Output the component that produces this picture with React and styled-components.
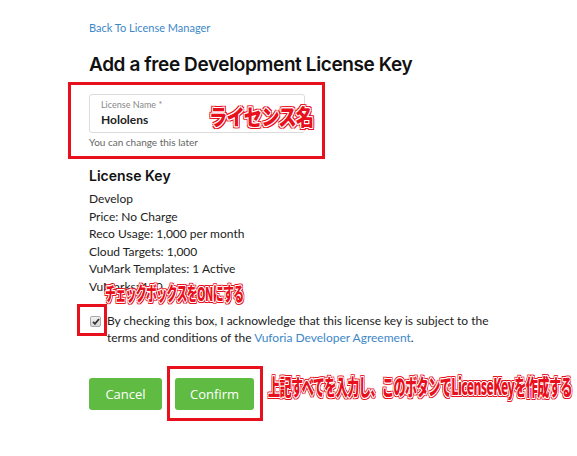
import React from 'react'
import styled, { createGlobalStyle } from 'styled-components'

const Global = createGlobalStyle`
  body {
    margin: 0;
    background: #ffffff;
    font-family: Lato, "Liberation Sans", sans-serif;
    color: #222;
  }
`

const Page = styled.div`
  width: 577px;
  height: 456px;
  padding: 21px 0 0 89px;
  box-sizing: border-box;
  position: relative;
  overflow: hidden;
`

const BackLink = styled.a`
  display: block;
  font-size: 11px;
  line-height: 14px;
  color: #3d87c7;
  text-decoration: none;
`

const Title = styled.h1`
  margin: 17px 0 0;
  font-family: Inter, "Liberation Sans", sans-serif;
  font-size: 19px;
  line-height: 26px;
  font-weight: 600;
  color: #111;
  letter-spacing: -0.4px;
`

const FieldArea = styled.div`
  position: relative;
  margin-top: 8px;
  width: 216px;
  padding-top: 8px;
`

const Highlight = styled.div`
  position: absolute;
  border: 3px solid #e8101c;
  pointer-events: none;
  left: ${p => p.$left}px;
  top: ${p => p.$top}px;
  width: ${p => p.$width}px;
  height: ${p => p.$height}px;
  box-sizing: border-box;
`

const InputBox = styled.div`
  border: 1px solid #dcdcdc;
  border-radius: 3px;
  height: 39px;
  box-sizing: border-box;
  padding: 4px 11px 0;
`

const InputLabel = styled.div`
  font-size: 9px;
  line-height: 12px;
  color: #888;
`

const InputValue = styled.div`
  font-size: 12px;
  line-height: 17px;
  color: #222;
  font-weight: 700;
`

const Helper = styled.div`
  font-size: 10px;
  line-height: 14px;
  color: #666;
  margin-top: 2px;
`

const SectionTitle = styled.h2`
  margin: 18px 0 0;
  font-family: Inter, "Liberation Sans", sans-serif;
  font-size: 14px;
  line-height: 18px;
  font-weight: 600;
  color: #111;
`

const InfoList = styled.div`
  margin-top: 5px;
  font-size: 12px;
  line-height: 17.5px;
  color: #222;
`

const Note = styled.div`
  position: absolute;
  left: ${p => p.$left}px;
  top: ${p => p.$top}px;
  font-family: "Noto Sans CJK JP", sans-serif;
  font-weight: 900;
  font-size: ${p => p.$size}px;
  line-height: 1;
  color: #e8101c;
  white-space: nowrap;
  transform: scaleX(${p => p.$squeeze});
  transform-origin: left center;
  letter-spacing: -1px;
  text-shadow:
    1px 0 0 #fff, -1px 0 0 #fff, 0 1px 0 #fff, 0 -1px 0 #fff,
    1px 1px 0 #fff, -1px -1px 0 #fff, 1px -1px 0 #fff, -1px 1px 0 #fff,
    2px 0 0 #e8101c, -2px 0 0 #e8101c, 0 2px 0 #e8101c, 0 -2px 0 #e8101c,
    2px 2px 0 #e8101c, -2px -2px 0 #e8101c, 2px -2px 0 #e8101c, -2px 2px 0 #e8101c;
`

const AgreeRow = styled.div`
  position: relative;
  display: flex;
  align-items: flex-start;
  gap: 6px;
  margin-top: 17px;
  width: 420px;
`

const Check = styled.span`
  margin: 4px 0 0 1px;
  width: 11px;
  height: 11px;
  flex: none;
  box-sizing: border-box;
  border: 1px solid #a9a9a9;
  border-radius: 2px;
  background: linear-gradient(#f2f2f2, #d6d6d6);
  display: flex;
  align-items: center;
  justify-content: center;
`

const AgreeText = styled.div`
  font-size: 12px;
  line-height: 17px;
  color: #222;
`

const Link = styled.a`
  color: #3d87c7;
  text-decoration: none;
`

const Buttons = styled.div`
  position: relative;
  display: flex;
  gap: 13px;
  margin-top: 32px;
`

const Button = styled.button`
  height: 32px;
  width: ${p => p.$width}px;
  border: 0;
  border-radius: 3px;
  background: #5fbb42;
  color: #fff;
  font-family: "Open Sans", "Liberation Sans", sans-serif;
  font-size: 13px;
  padding: 0;
`

export default function App() {
  return (
    <Page>
      <Global />
      <BackLink href="#">Back To License Manager</BackLink>
      <Title>Add a free Development License Key</Title>
      <FieldArea>
        <Highlight $left={-21} $top={-4} $width={257} $height={77} />
        <InputBox>
          <InputLabel>License Name *</InputLabel>
          <InputValue>Hololens</InputValue>
        </InputBox>
        <Helper>You can change this later</Helper>
        <Note $left={120} $top={18} $size={22} $squeeze={0.83}>ライセンス名</Note>
      </FieldArea>
      <SectionTitle>License Key</SectionTitle>
      <InfoList>
        <div>Develop</div>
        <div>Price: No Charge</div>
        <div>Reco Usage: 1,000 per month</div>
        <div>Cloud Targets: 1,000</div>
        <div>VuMark Templates: 1 Active</div>
        <div>VuMarks: 100</div>
      </InfoList>
      <AgreeRow>
        <Highlight $left={-12} $top={-8} $width={30} $height={32} />
        <Note $left={16} $top={-29} $size={19} $squeeze={0.57}>チェックボックスをONにする</Note>
        <Check>
          <svg width="8" height="7" viewBox="0 0 8 7">
            <path d="M1 3.8 L3 5.8 L7 1" fill="none" stroke="#333" strokeWidth="1.8" />
          </svg>
        </Check>
        <AgreeText>
          By checking this box, I acknowledge that this license key is subject to the terms and conditions of
          the <Link href="#">Vuforia Developer Agreement</Link>.
        </AgreeText>
      </AgreeRow>
      <Buttons>
        <Button $width={73}>Cancel</Button>
        <Button $width={79}>Confirm</Button>
        <Highlight $left={78} $top={-12} $width={96} $height={55} />
        <Note $left={179} $top={-4} $size={22} $squeeze={0.55}>上記すべてを入力し、このボタンでLicenseKeyを作成する</Note>
      </Buttons>
    </Page>
  )
}
